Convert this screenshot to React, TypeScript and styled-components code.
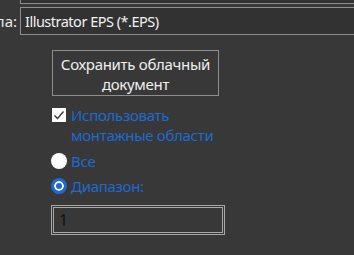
import React from "react";
import styled, { createGlobalStyle } from "styled-components";

const Global = createGlobalStyle`
  html, body { margin: 0; padding: 0; background: #383838; }
  body { font-family: "Noto Sans", "Open Sans", sans-serif; overflow: hidden; }
`;

const Page = styled.div`
  width: 354px;
  height: 255px;
  display: flex;
  flex-direction: column;
  overflow: hidden;
`;

const TopBox = styled.div`
  margin-left: 20px;
  height: 3px;
  border-left: 1px solid #8e8e8e;
  border-bottom: 1px solid #8e8e8e;
  background: #323232;
`;

const FieldRow = styled.div`
  display: flex;
  align-items: center;
  margin-top: 3px;
  gap: 3px;
`;

const Label = styled.div`
  width: 17px;
  display: flex;
  justify-content: flex-end;
  overflow: hidden;
  white-space: nowrap;
  color: #e8e8e8;
  font-size: 15px;
`;

const Select = styled.div`
  flex: 1;
  height: 26px;
  margin-right: -4px;
  border: 1px solid #8e8e8e;
  border-right: none;
  background: #323232;
  color: #f2f2f2;
  font-size: 14.5px;
  letter-spacing: -0.5px;
  display: flex;
  align-items: center;
  padding-left: 4px;
  white-space: nowrap;
`;

const Column = styled.div`
  margin-left: 52px;
  margin-top: 15px;
  width: 168px;
  display: flex;
  flex-direction: column;
`;

const Button = styled.div`
  width: 165px;
  height: 42px;
  padding-top: 2px;
  border: 1px solid #8e8e8e;
  color: #f0f0f0;
  font-size: 15px;
  letter-spacing: -0.3px;
  line-height: 20px;
  text-align: center;
  display: flex;
  align-items: center;
  justify-content: center;
`;

const CheckRow = styled.div`
  display: flex;
  align-items: flex-start;
  gap: 5px;
  margin-top: 9px;
`;

const Box = styled.div`
  width: 14px;
  height: 14px;
  background: #fff;
  margin-top: 3px;
  display: flex;
  align-items: center;
  justify-content: center;
  flex-shrink: 0;
`;

const BlueText = styled.div`
  color: #1c6ad2;
  font-size: 15px;
  letter-spacing: -0.3px;
  line-height: 20px;
  white-space: nowrap;
`;

const RadioRow = styled.div<{ $top: number }>`
  display: flex;
  align-items: center;
  gap: 4px;
  margin-top: ${(p) => p.$top}px;
  margin-left: -1px;
`;

const Radio = styled.div<{ $on?: boolean }>`
  width: 16px;
  height: 16px;
  border-radius: 50%;
  box-sizing: border-box;
  background: ${(p) => (p.$on ? "#1c6ad2" : "#fff")};
  border: ${(p) => (p.$on ? "3px solid #1c6ad2" : "none")};
  box-shadow: ${(p) => (p.$on ? "inset 0 0 0 2px #fff" : "none")};
  flex-shrink: 0;
`;

const NumField = styled.div`
  margin-top: 9px;
  margin-left: -1px;
  width: 163px;
  height: 24px;
  border: 3px double #a8a8a8;
  color: #111;
  font-size: 16px;
  display: flex;
  align-items: center;
  padding-left: 5px;
`;

export default function App() {
  return (
    <Page>
      <Global />
      <TopBox />
      <FieldRow>
        <Label>Тип файла:</Label>
        <Select>Illustrator EPS (*.EPS)</Select>
      </FieldRow>
      <Column>
        <Button>
          Сохранить облачный
          <br />
          документ
        </Button>
        <CheckRow>
          <Box>
            <svg width="12" height="12" viewBox="0 0 12 12">
              <path d="M1.5 6.5 L4.5 9.5 L10.5 2.5" fill="none" stroke="#333" strokeWidth="1.3" />
            </svg>
          </Box>
          <BlueText>
            Использовать
            <br />
            монтажные области
          </BlueText>
        </CheckRow>
        <RadioRow $top={6}>
          <Radio />
          <BlueText>Все</BlueText>
        </RadioRow>
        <RadioRow $top={5}>
          <Radio $on />
          <BlueText>Диапазон:</BlueText>
        </RadioRow>
        <NumField>1</NumField>
      </Column>
    </Page>
  );
}
